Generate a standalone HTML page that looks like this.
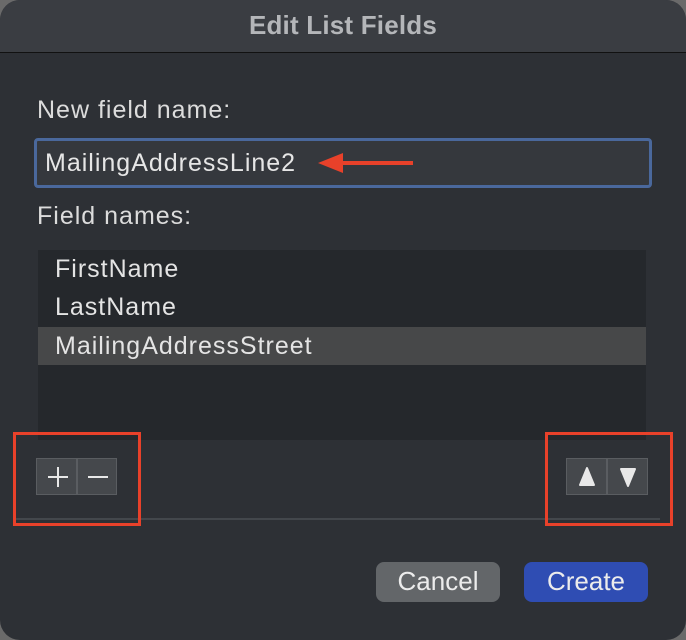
<!DOCTYPE html>
<html><head><style>
*{margin:0;padding:0;box-sizing:border-box}
html,body{width:686px;height:640px;overflow:hidden;background:#6a6a6a;font-family:"Liberation Sans",sans-serif}
.win{position:absolute;left:0;top:0;width:686px;height:640px;background:#2d3035;border-radius:20px;overflow:hidden}
.title{position:absolute;left:0;top:0;width:686px;height:53px;background:#3a3d42;border-bottom:1px solid #111;color:#b4b6b9;font-weight:bold;font-size:26px;letter-spacing:0.2px;text-align:center;line-height:50px}
.lbl{position:absolute;left:37px;color:#dcdcdc;font-size:25px;letter-spacing:1px;line-height:29px}
.field{position:absolute;left:34px;top:138px;width:618px;height:50px;border:3px solid #4a689c;border-radius:4px;background:#35383d}
.field span{position:absolute;left:8px;top:7px;color:#e6e6e6;font-size:25px;letter-spacing:1px;line-height:30px}
.list{position:absolute;left:38px;top:250px;width:608px;height:190px;background:#25282c}
.row{position:absolute;left:0;width:608px;height:38px;color:#e4e4e4;font-size:25px;letter-spacing:1px;padding-left:17px;line-height:38px}
.btn{position:absolute;top:458px;height:37px;background:#45484c;border:1px solid #5a5d61}
.sep{position:absolute;left:15px;top:518px;width:645px;height:2px;background:#43474c}
.rb{position:absolute;top:432px;width:128px;height:94px;border:3px solid #e8412a}
.pb{position:absolute;top:562px;height:40px;width:124px;border-radius:8px;color:#ececec;font-size:26px;text-align:center;line-height:39px}
</style></head><body>
<div class="win">
<div class="title">Edit List Fields</div>
<div class="lbl" style="top:96px">New field name:</div>
<div class="field"><span>MailingAddressLine2</span>
<svg style="position:absolute;left:281px;top:7px" width="140" height="30"><polygon points="0,15 25,5 25,25" fill="#e8412a"/><rect x="22" y="13" width="73" height="4" fill="#e8412a"/></svg></div>
<div class="lbl" style="top:202px">Field names:</div>
<div class="list">
<div class="row" style="top:0">FirstName</div>
<div class="row" style="top:38px">LastName</div>
<div class="row" style="top:77px;background:#474849">MailingAddressStreet</div>
</div>
<div class="btn" style="left:36px;width:41px"><svg width="41" height="37"><path d="M21 8v20M11 18h20" stroke="#e8e8e8" stroke-width="2"/></svg></div>
<div class="btn" style="left:77px;width:40px"><svg width="40" height="37"><path d="M10 18h20" stroke="#e8e8e8" stroke-width="2"/></svg></div>
<div class="btn" style="left:566px;width:41px"><svg width="41" height="37"><polygon points="20,9 27,26 13,26" fill="#e8e8e8" stroke="#e8e8e8" stroke-linejoin="round" stroke-width="2"/></svg></div>
<div class="btn" style="left:607px;width:41px"><svg width="41" height="37"><polygon points="13,10 27,10 20,27" fill="#e8e8e8" stroke="#e8e8e8" stroke-linejoin="round" stroke-width="2"/></svg></div>
<div class="sep"></div>
<div class="rb" style="left:13px"></div>
<div class="rb" style="left:545px"></div>
<div class="pb" style="left:376px;background:#636669">Cancel</div>
<div class="pb" style="left:524px;background:#2f4db3">Create</div>
</div>
</body></html>
